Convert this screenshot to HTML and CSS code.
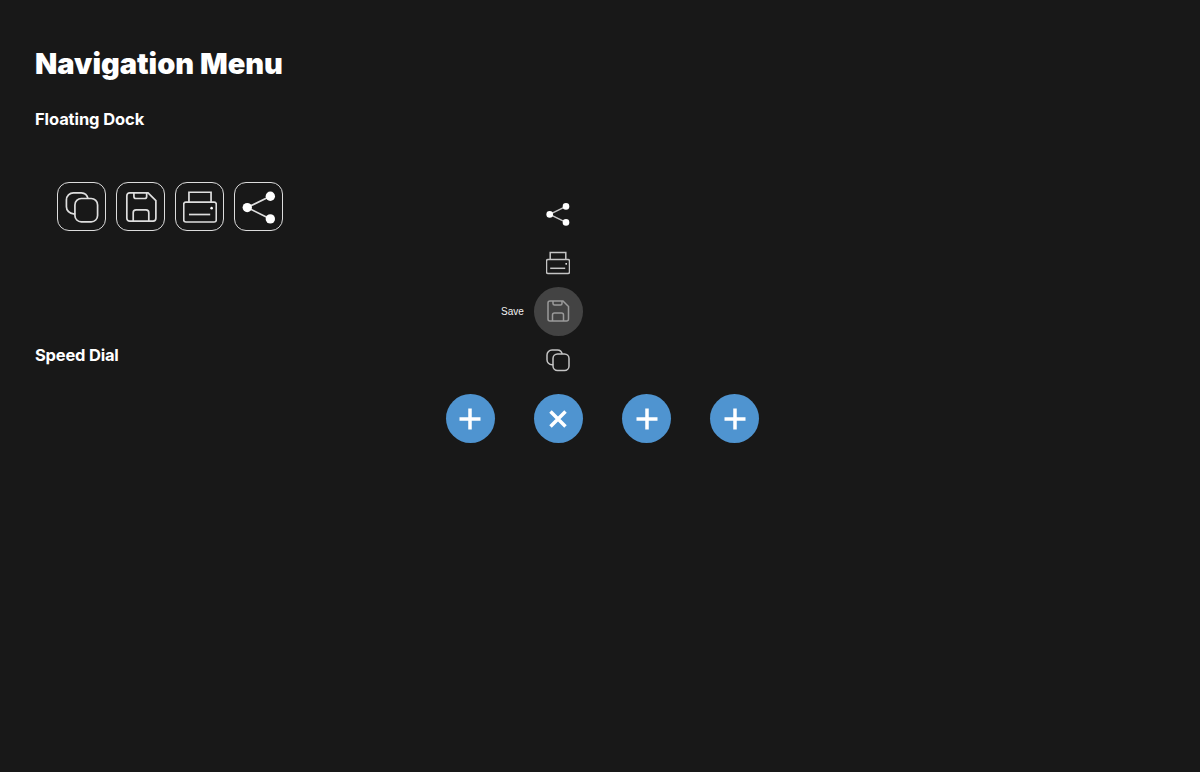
FILE: index.html
```html
<!DOCTYPE html>
<html lang="en">
<head>
<meta charset="utf-8">
<title>Navigation Menu</title>
<link rel="stylesheet" href="styles.css">
</head>
<body>
<svg class="defs" width="0" height="0" aria-hidden="true">
  <symbol id="i-copy" viewBox="0 0 24 24"><path d="M7.2 16.8H6a5 5 0 0 1-5-5V7a5 5 0 0 1 5-5h5.500a5 5 0 0 1 4.700 4"/><rect x="7" y="6" width="16" height="16.500" rx="4.500"/></symbol>
  <symbol id="i-save" viewBox="0 0 24 24"><path d="M4 2h13L22.500 7.500V20a2 2 0 0 1-2 2H4a2 2 0 0 1-2-2V4a2 2 0 0 1 2-2z"/><path d="M7 2v2.500A1.500 1.500 0 0 0 8.500 6h6A1.500 1.500 0 0 0 16 4.500V2"/><path d="M6.500 22v-6a2 2 0 0 1 2-2h7a2 2 0 0 1 2 2v6"/></symbol>
  <symbol id="i-print" viewBox="0 0 24 24"><path d="M4.200 8.600V1.600h15.600v7"/><rect x="0.500" y="8.600" width="23" height="14" rx="1.500"/><path d="M4.200 17.300h15"/><circle class="fill" cx="20.200" cy="12.800" r="0.900"/></symbol>
  <symbol id="i-share" viewBox="0 0 24 24"><path d="M3.700 12.400 20 4.400M3.700 12.400 20 20.400"/><circle class="fill" cx="3.700" cy="12.400" r="3.300"/><circle class="fill" cx="20" cy="4.400" r="3.300"/><circle class="fill" cx="20" cy="20.400" r="3.300"/></symbol>
</svg>
<main class="page">
  <h1 class="title">Navigation Menu</h1>
  <h2 class="heading">Floating Dock</h2>
  <nav class="dock">
    <button class="dock-btn"><svg class="icon-lg"><use href="#i-copy"/></svg></button>
    <button class="dock-btn"><svg class="icon-lg"><use href="#i-save"/></svg></button>
    <button class="dock-btn"><svg class="icon-lg"><use href="#i-print"/></svg></button>
    <button class="dock-btn"><svg class="icon-lg"><use href="#i-share"/></svg></button>
  </nav>
  <h2 class="heading heading-dial">Speed Dial</h2>
  <div class="dials">
    <button class="fab"><svg class="glyph" viewBox="0 0 24 24"><path d="M12 1.500v21M1.500 12h21"/></svg></button>
    <div class="dial-open">
      <div class="menu">
        <button class="action"><svg class="icon-sm"><use href="#i-share"/></svg></button>
        <button class="action"><svg class="icon-sm"><use href="#i-print"/></svg></button>
        <button class="action is-active"><svg class="icon-sm"><use href="#i-save"/></svg><span class="tip">Save</span></button>
        <button class="action"><svg class="icon-sm"><use href="#i-copy"/></svg></button>
      </div>
      <button class="fab"><svg class="glyph" viewBox="0 0 24 24"><path d="M4.500 4.500l15 15M19.500 4.500l-15 15"/></svg></button>
    </div>
    <button class="fab"><svg class="glyph" viewBox="0 0 24 24"><path d="M12 1.500v21M1.500 12h21"/></svg></button>
    <button class="fab"><svg class="glyph" viewBox="0 0 24 24"><path d="M12 1.500v21M1.500 12h21"/></svg></button>
  </div>
</main>
</body>
</html>
```
FILE: styles.css
```css
* { box-sizing: border-box; }
html, body { margin: 0; height: 100%; }
body { background: #181818; color: #fff; font-family: Inter, "Noto Sans", sans-serif; }
.defs { position: absolute; }
.page { padding: 46px 35px 0; }
.title { margin: 0; font-size: 29px; line-height: 35px; font-weight: 900; letter-spacing: 0; }
.heading { margin: 28px 0 0; font-size: 16.500px; line-height: 20px; font-weight: 700; letter-spacing: -0.1px; }
.heading-dial { margin-top: 114px; letter-spacing: -0.2px; }
.dock { display: flex; gap: 10px; margin: 53px 0 0 22px; }
.dock-btn { width: 49px; height: 49px; padding: 0; display: flex; align-items: center; justify-content: center; background: transparent; border: 1.200px solid #dcdcdc; border-radius: 12px; }
.icon-lg, .icon-sm { fill: none; stroke: #dedede; stroke-width: 1.200; display: block; overflow: visible; }
.icon-lg { width: 34px; height: 34px; }
.icon-sm { width: 24px; height: 24px; stroke: #c4c4c4; stroke-width: 1.500; }
.fill { fill: #fff; stroke: none; }
.dials { display: flex; justify-content: center; gap: 39.300px; margin-top: 29px; padding-left: 5px; }
.dial-open { position: relative; width: 49px; height: 49px; }
.menu { position: absolute; left: 0; bottom: 58.500px; display: flex; flex-direction: column; gap: 0; }
.action { position: relative; width: 49px; height: 48.700px; padding: 0; display: flex; align-items: center; justify-content: center; background: transparent; border: 0; border-radius: 50%; }
.action.is-active { background: #434343; }
.action.is-active .icon-sm { stroke: #9a9a9a; }
.tip { position: absolute; right: 59px; top: 50%; margin-top: 1px; transform: translateY(-50%); font-size: 10px; line-height: 12px; color: #f0f0f0; font-family: "Liberation Sans", sans-serif; }
.fab { width: 49px; height: 49px; padding: 0; display: flex; align-items: center; justify-content: center; background: #4f94d0; border: 0; border-radius: 50%; }
.glyph { width: 24px; height: 24px; fill: none; stroke: #fff; stroke-width: 3.500; }
```
